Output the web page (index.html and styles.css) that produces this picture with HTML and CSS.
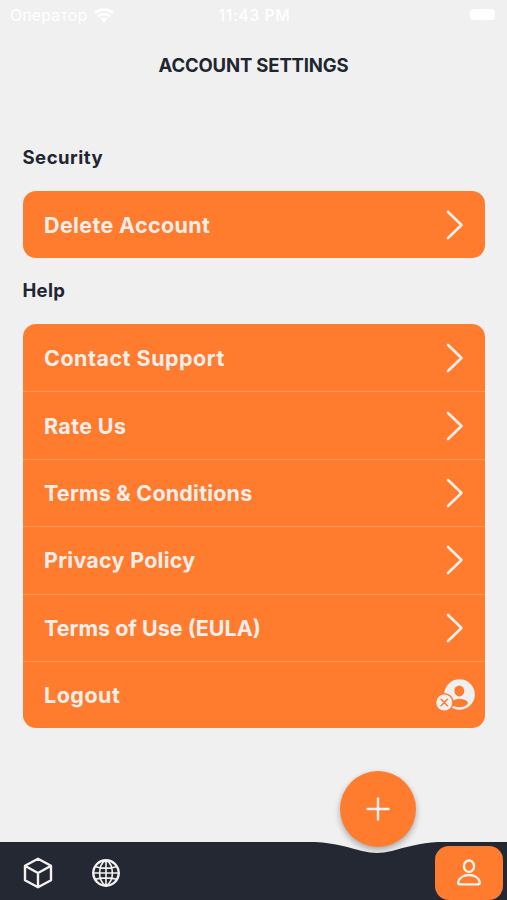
FILE: index.html
```html
<!DOCTYPE html>
<html lang="en">

<head>
    <meta charset="UTF-8">
    <meta name="viewport" content="width=device-width, initial-scale=1.0">
    <title>Account settings</title>
    <link rel="stylesheet" href="styles.css">
</head>

<body>
    <div class="statusBar">
        <div class="operator">
            <span>Оператор</span>
            <svg class="wifi" width="20" height="15" viewBox="0 0 20 15">
                <path d="M1 5.2a13 13 0 0 1 18 0M4 8.6a8.6 8.6 0 0 1 12 0" fill="none" stroke="#fff" stroke-width="2.7" />
                <path d="M6.6 10.8a5 5 0 0 1 6.8 0L10 14.4z" fill="#fff" />
            </svg>
        </div>
        <span class="time">11:43 PM</span>
        <div class="batteryBox"><span class="battery"></span></div>
    </div>

    <h1 class="title">ACCOUNT SETTINGS</h1>

    <div class="content">
        <h2 class="section">Security</h2>
        <div class="card">
            <div class="row">
                <span class="deleteText">Delete Account</span>
                <svg class="arrow" viewBox="0 0 18 30"><path d="M2 2l13.5 13L2 28" /></svg>
            </div>
        </div>

        <h2 class="section help">Help</h2>
        <div class="card">
            <div class="row">
                <span class="contactText">Contact Support</span>
                <svg class="arrow" viewBox="0 0 18 30"><path d="M2 2l13.5 13L2 28" /></svg>
            </div>
            <div class="row">
                <span class="rateText">Rate Us</span>
                <svg class="arrow" viewBox="0 0 18 30"><path d="M2 2l13.5 13L2 28" /></svg>
            </div>
            <div class="row">
                <span class="termsText">Terms &amp; Conditions</span>
                <svg class="arrow" viewBox="0 0 18 30"><path d="M2 2l13.5 13L2 28" /></svg>
            </div>
            <div class="row">
                <span class="privacyText">Privacy Policy</span>
                <svg class="arrow" viewBox="0 0 18 30"><path d="M2 2l13.5 13L2 28" /></svg>
            </div>
            <div class="row">
                <span class="eulaText">Terms of Use (EULA)</span>
                <svg class="arrow" viewBox="0 0 18 30"><path d="M2 2l13.5 13L2 28" /></svg>
            </div>
            <div class="row">
                <span class="logoutText">Logout</span>
                <svg class="logout" width="40" height="34" viewBox="0 0 40 34">
                    <circle cx="24.5" cy="16.500" r="15.3" fill="#f0f0f0" />
                    <ellipse cx="24.3" cy="13" rx="5" ry="5.4" fill="#ff7b2e" />
                    <path d="M16 26.500c0-4 4-5.600 8.600-5.600s8.400 1.600 8.400 4.400c-1.600 2.600-5 4-8.600 4-3.200 0-6.200-1-8.400-2.800z" fill="#ff7b2e" />
                    <circle cx="9.300" cy="24.500" r="9.400" fill="#ff7b2e" />
                    <circle cx="9.300" cy="24.500" r="8" fill="#f0f0f0" />
                    <path d="M6.100 21.300l6.400 6.400m0-6.400l-6.400 6.400" stroke="#ff7b2e" stroke-width="1.500" stroke-linecap="round" />
                </svg>
            </div>
        </div>
    </div>

    <div class="tabBar">
        <svg class="tabBack" width="507" height="58" viewBox="0 0 507 58">
            <path d="M0 0H315C336 1 350 6 362 9C373 11.500 381 11.500 392 9C406 5 420 1 438 0H507V58H0z" fill="#232832" />
        </svg>
        <svg class="tabIcon box" width="30" height="32" viewBox="0 0 30 32">
            <path d="M15 1.800L28 8.800V23.200L15 30.200L2 23.200V8.800zM2.300 9L15 16L27.700 9M15 16V30" />
        </svg>
        <svg class="tabIcon globe" width="30" height="30" viewBox="0 0 30 30">
            <circle cx="15" cy="15" r="12.700" />
            <path class="thin" d="M15 2V28M2 15H28M4.600 8.800C10 10.600 20 10.600 25.400 8.800M4.600 21.200C10 19.400 20 19.400 25.400 21.200M15 2C6.500 7 6.500 23 15 28M15 2C23.500 7 23.500 23 15 28" />
        </svg>
        <div class="profile">
            <svg class="tabIcon" width="26" height="28" viewBox="0 0 26 28">
                <ellipse cx="13" cy="7.200" rx="5.100" ry="5.700" />
                <path d="M4 25.400C2.500 25.400 2 24.500 2.200 23.300C3.200 18.600 7.800 16 13 16S22.800 18.600 23.800 23.300C24 24.500 23.500 25.400 22 25.400z" />
            </svg>
        </div>
        <div class="plus">
            <svg class="tabIcon" width="24" height="24" viewBox="0 0 24 24"><path d="M12 1.500V22.500M1.500 12H22.500" /></svg>
        </div>
    </div>
</body>

</html>
```
FILE: styles.css
```css
* {
    box-sizing: border-box;
}

body {
    margin: 0;
    height: 900px;
    display: flex;
    flex-direction: column;
    background: #f0f0f0;
    color: #20252f;
    font-family: Inter, "Liberation Sans", sans-serif;
    overflow: hidden;
}

.statusBar {
    height: 30px;
    padding: 0 12px 0 10px;
    display: grid;
    grid-template-columns: 1fr auto 1fr;
    align-items: center;
    color: #fff;
    font-size: 16px;
}

.operator {
    display: flex;
    align-items: center;
    gap: 7px;
    letter-spacing: 0.1px;
}

.time {
    margin-left: 4px;
    font-weight: 500;
    letter-spacing: 0.5px;
}

.batteryBox {
    display: flex;
    justify-content: flex-end;
}

.battery {
    width: 25px;
    height: 11px;
    margin-top: -2px;
    border-radius: 4px;
    background: #fff;
}

.title {
    margin: 23px 0 0;
    height: 24px;
    line-height: 24px;
    font-size: 18.5px;
    letter-spacing: -0.15px;
    text-align: center;
}

.content {
    padding: 69px 22px 0 22.5px;
    flex: 1;
}

.section {
    margin: 0;
    height: 45px;
    line-height: 23px;
    font-size: 18.5px;
    letter-spacing: 0.5px;
}

.help {
    margin-top: 20.6px;
    letter-spacing: 0.3px;
}

.card {
    border-radius: 13px;
    background: #ff7b2e;
    overflow: hidden;
}

.row {
    height: 67.4px;
    padding: 0 21px 0 21.5px;
    display: flex;
    align-items: center;
    justify-content: space-between;
    color: #f7eeea;
    font-size: 21.5px;
    font-weight: bold;
    white-space: nowrap;
}

.row + .row {
    border-top: 1px solid #ff9658;
}

.deleteText {
    letter-spacing: 0.36px;
}

.contactText {
    letter-spacing: 0.5px;
}

.rateText {
    letter-spacing: 0.35px;
}

.termsText {
    letter-spacing: 0.2px;
}

.privacyText {
    letter-spacing: 0.25px;
}

.logoutText {
    letter-spacing: 0.5px;
}

.arrow {
    width: 18px;
    height: 30px;
    fill: none;
    stroke: #f8eeea;
    stroke-width: 2.6;
    stroke-linecap: round;
    stroke-linejoin: round;
}

.logout {
    margin-right: -11px;
}

.tabBar {
    position: relative;
    height: 58px;
    padding: 0 4px 0 23px;
    display: flex;
    align-items: center;
}

.tabBack {
    position: absolute;
    left: 0;
    top: 0;
}

.tabIcon {
    position: relative;
    fill: none;
    stroke: #f5f1f0;
    stroke-width: 2.4;
    stroke-linecap: round;
    stroke-linejoin: round;
}

.box {
    margin-top: 4px;
}

.globe {
    margin: 4px 0 0 38px;
}

.thin {
    stroke-width: 1.6;
}

.profile {
    position: relative;
    width: 68px;
    height: 54px;
    margin: 4px 0 0 auto;
    border-radius: 14px;
    background: #ff7b2e;
    display: flex;
    align-items: center;
    justify-content: center;
}

/* floating button over the notch */
.plus {
    position: absolute;
    left: 339.5px;
    top: -71.5px;
    width: 76px;
    height: 76px;
    border-radius: 50%;
    background: #ff7b2e;
    box-shadow: 0 3px 6px rgba(0, 0, 0, 0.3);
    display: flex;
    align-items: center;
    justify-content: center;
}
```
